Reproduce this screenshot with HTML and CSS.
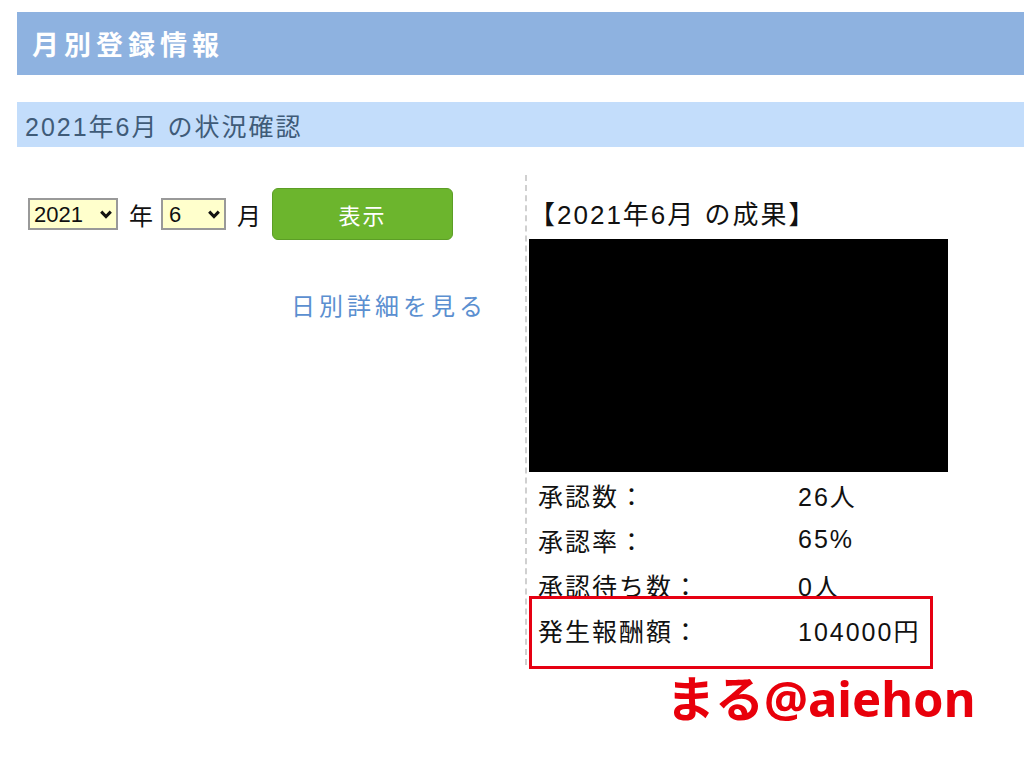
FILE: index.html
```html
<!DOCTYPE html>
<html lang="ja">
<head>
  <meta charset="UTF-8">
  <title>月別登録情報</title>
  <link rel="stylesheet" href="styles.css">
</head>
<body>
  <div class="page">
    <div class="title-bar">
      <h1>月別登録情報</h1>
    </div>
    <div class="sub-bar">2021年6月 の状況確認</div>

    <div class="content">
      <div class="left-col">
        <form class="month-form">
          <span class="select-wrap select-year">
            <select>
              <option>2021</option>
            </select>
            <svg class="chevron" viewBox="0 0 12 9"><path d="M1.2 1.6 L6 6.6 L10.8 1.6" fill="none" stroke="#111" stroke-width="3"/></svg>
          </span>
          <span class="unit">年</span>
          <span class="select-wrap select-month">
            <select>
              <option>6</option>
            </select>
            <svg class="chevron" viewBox="0 0 12 9"><path d="M1.2 1.6 L6 6.6 L10.8 1.6" fill="none" stroke="#111" stroke-width="3"/></svg>
          </span>
          <span class="unit">月</span>
          <button type="button" class="button">表示</button>
        </form>
        <a class="detail-link" href="#">日別詳細を見る</a>
      </div>

      <div class="right-col">
        <h2 class="result-title">【2021年6月 の成果】</h2>
        <div class="chart-box"></div>
        <div class="stat-row"><span class="label">承認数：</span><span class="value">26人</span></div>
        <div class="stat-row"><span class="label">承認率：</span><span class="value">65%</span></div>
        <div class="stat-row"><span class="label">承認待ち数：</span><span class="value">0人</span></div>
        <div class="stat-row"><span class="label">発生報酬額：</span><span class="value">104000円</span></div>
      </div>
    </div>
  </div>
  <div class="highlight"></div>
  <div class="watermark">まる@aiehon</div>
</body>
</html>
```

FILE: styles.css
```css
body {
  margin: 0;
  font-family: "Liberation Sans", "Noto Sans CJK JP", sans-serif;
  color: #111;
  background: #fff;
}

.page {
  padding: 12px 0 0 17px;
}

.title-bar {
  height: 63px;
  background-color: #8eb2e0;
  display: flex;
  align-items: center;
}

.title-bar h1 {
  margin: 0 0 0 15px;
  font-size: 27px;
  letter-spacing: 5px;
  font-weight: bold;
  color: #fff;
}

.sub-bar {
  margin-top: 27px;
  height: 45px;
  background-color: #c3ddfb;
  display: flex;
  align-items: center;
  padding-left: 8px;
  font-size: 25px;
  letter-spacing: 2px;
  color: #3f5b78;
}

.content {
  display: flex;
  margin-top: 28px;
}

.left-col {
  width: 508px;
}

.month-form {
  display: flex;
  align-items: center;
  padding: 13px 0 0 11px;
}

.select-wrap {
  position: relative;
  display: inline-block;
}

.select-wrap select {
  appearance: none;
  -webkit-appearance: none;
  background-color: #ffffcc;
  border: 2px solid #999;
  border-radius: 0;
  height: 32px;
  font-family: "Liberation Sans", sans-serif;
  font-size: 22px;
  color: #111;
  padding: 0 0 0 4px;
  margin: 0;
}

.select-year select {
  width: 90px;
}

.select-month select {
  width: 65px;
  padding-left: 6px;
}

.chevron {
  position: absolute;
  top: 12px;
  width: 12px;
  height: 9px;
  pointer-events: none;
}

.select-year .chevron {
  left: 72px;
}

.select-month .chevron {
  left: 47px;
}

.unit {
  font-size: 24px;
  margin: 0 8px 0 11px;
}

.button {
  background-color: #6cb52d;
  color: white;
  border: 1px solid #5c9e26;
  border-radius: 6px;
  width: 181px;
  height: 52px;
  font-family: "Liberation Sans", "Noto Sans CJK JP", sans-serif;
  font-size: 22px;
  letter-spacing: 2px;
  margin-left: 3px;
  cursor: pointer;
}

.detail-link {
  display: block;
  text-align: right;
  margin: 47px 38px 0 0;
  font-size: 24px;
  letter-spacing: 4px;
  color: #5b8fd0;
  text-decoration: none;
}

.right-col {
  border-left: 2px dashed #d0d0d0;
  height: 490px;
  padding-left: 2px;
}

.result-title {
  margin: 19px 0 0 0;
  font-size: 26px;
  letter-spacing: 2px;
  font-weight: normal;
  height: 45px;
}

.chart-box {
  width: 419px;
  height: 233px;
  background-color: #000;
}

.stat-row {
  display: flex;
  font-size: 25px;
  letter-spacing: 2px;
  height: 45px;
  align-items: center;
  padding-left: 9px;
}

.stat-row:first-of-type {
  margin-top: 3px;
}

.stat-row .label {
  width: 260px;
}

/* annotation overlay on the screenshot */
.highlight {
  position: absolute;
  left: 529px;
  top: 596px;
  width: 398px;
  height: 67px;
  border: 3px solid #e60012;
}

.watermark {
  position: absolute;
  left: 666px;
  top: 660px;
  font-family: "Noto Sans", "Noto Sans CJK JP", sans-serif;
  font-weight: bold;
  font-size: 49px;
  color: #e8000b;
}
```
